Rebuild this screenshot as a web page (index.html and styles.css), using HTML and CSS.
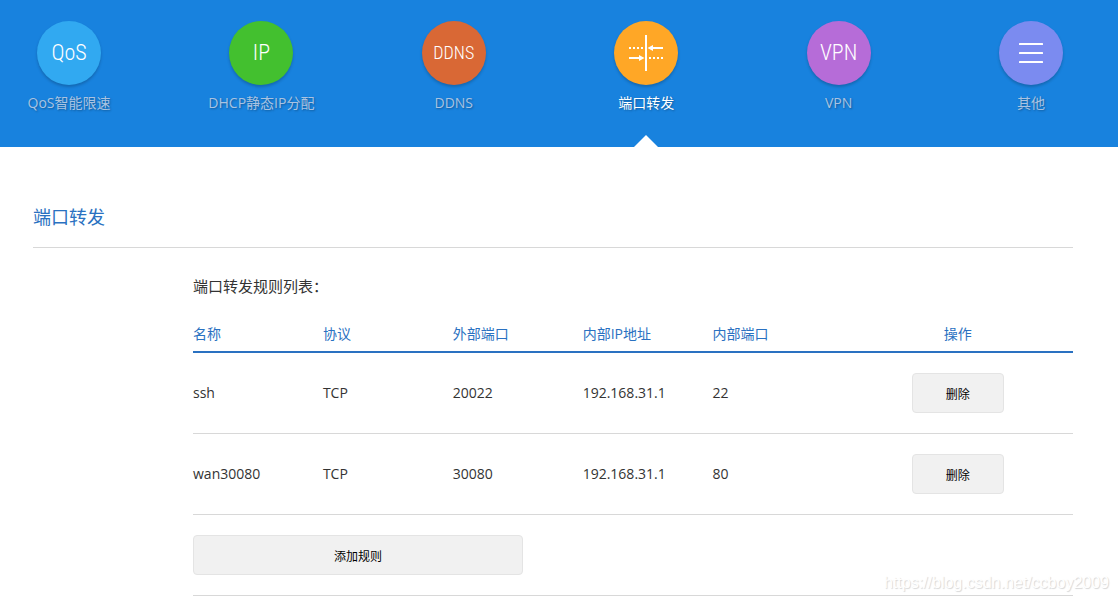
FILE: index.html
```html
<!DOCTYPE html>
<html lang="zh-CN">
<head>
<meta charset="utf-8">
<title>端口转发</title>
<link rel="stylesheet" href="styles.css">
</head>
<body>
<nav class="nav">
  <a class="nav-item" href="#qos"><span class="icon icon-qos">QoS</span><span class="nav-label">QoS智能限速</span></a>
  <a class="nav-item" href="#dhcp"><span class="icon icon-ip">IP</span><span class="nav-label">DHCP静态IP分配</span></a>
  <a class="nav-item" href="#ddns"><span class="icon icon-ddns">DDNS</span><span class="nav-label">DDNS</span></a>
  <a class="nav-item active" href="#nat" aria-current="page">
    <span class="icon icon-nat">
      <svg width="64" height="64" viewBox="0 0 64 64" fill="#fff" aria-hidden="true">
        <path d="M31 14h2v36h-2z"/>
        <path d="M15 26h2v2h-2zM19 26h2v2h-2zM23 26h2v2h-2zM27 26h2v2h-2zM35 36h2v2h-2zM39 36h2v2h-2zM43 36h2v2h-2zM47 36h2v2h-2z"/>
        <path d="M49 26v2H39v2l-5.500-3 5.500-3v2zM15 36v2h10v2l5.500-3-5.500-3v2z"/>
      </svg>
    </span>
    <span class="nav-label">端口转发</span>
  </a>
  <a class="nav-item" href="#vpn"><span class="icon icon-vpn">VPN</span><span class="nav-label">VPN</span></a>
  <a class="nav-item" href="#other">
    <span class="icon icon-other">
      <svg width="64" height="64" viewBox="0 0 64 64" fill="#fff" aria-hidden="true">
        <rect x="20" y="22" width="24" height="2" rx="0.500"/>
        <rect x="20" y="31" width="24" height="2" rx="0.500"/>
        <rect x="20" y="40" width="24" height="2" rx="0.500"/>
      </svg>
    </span>
    <span class="nav-label">其他</span>
  </a>
</nav>
<main class="content">
  <h1 class="title">端口转发</h1>
  <section class="panel">
    <h2 class="subtitle" id="rules-title">端口转发规则列表：</h2>
    <table class="rules" aria-labelledby="rules-title">
      <thead>
        <tr><th>名称</th><th>协议</th><th>外部端口</th><th>内部IP地址</th><th>内部端口</th><th class="action">操作</th></tr>
      </thead>
      <tbody>
        <tr><td>ssh</td><td>TCP</td><td>20022</td><td>192.168.31.1</td><td>22</td><td class="action"><button class="btn btn-delete" type="button">删除</button></td></tr>
        <tr><td>wan30080</td><td>TCP</td><td>30080</td><td>192.168.31.1</td><td>80</td><td class="action"><button class="btn btn-delete" type="button">删除</button></td></tr>
      </tbody>
    </table>
    <div class="add-row"><button class="btn btn-add" type="button">添加规则</button></div>
  </section>
</main>
<span class="watermark">https://blog.csdn.net/ccboy2009</span>
</body>
</html>
```
FILE: styles.css
```css
* { box-sizing: border-box; }

body {
  margin: 0;
  background: #fff;
  color: #333;
  font: 14px/20px "Open Sans", "Noto Sans CJK SC", sans-serif;
}

.nav {
  display: flex;
  justify-content: space-between;
  padding: 21px 23px 0 5px;
  background: #1882de;
}

.nav-item {
  position: relative;
  display: flex;
  flex-direction: column;
  align-items: center;
  gap: 8px;
  width: 128px;
  padding-bottom: 34px;
  color: #a9c3e2;
  text-decoration: none;
  white-space: nowrap;
  text-shadow: 1px 1px 2px rgba(0, 0, 0, 0.3);
}

.nav-item.active { color: #fff; }

.nav-item.active::after {
  content: "";
  position: absolute;
  bottom: 0;
  left: 52px;
  border: 12px solid transparent;
  border-top: 0;
  border-bottom-color: #fff;
}

.icon {
  display: flex;
  align-items: center;
  justify-content: center;
  width: 64px;
  height: 64px;
  border-radius: 50%;
  box-shadow: 0 2px 3px rgba(0, 0, 0, 0.2);
  color: #fff;
  font-family: "Roboto Condensed", Roboto, sans-serif;
  font-size: 22px;
  font-weight: 300;
  text-shadow: none;
}

.icon-qos { background: #31a9f1; }
.icon-ip { background: #43c02f; }
.icon-ddns { background: #d96835; font-size: 18px; }
.icon-nat { background: #ffa726; }
.icon-vpn { background: #b66cd8; }
.icon-other { background: #7b8bf0; }

.content { padding: 56px 45px 0 33px; }

.title {
  margin: 0;
  padding-bottom: 16px;
  border-bottom: 1px solid #d8d8d8;
  color: #2a71c1;
  font-size: 18px;
  font-weight: 400;
  line-height: 28px;
}

.panel { padding: 28px 0 0 160px; }

.subtitle {
  margin: 0 0 28px;
  font-size: 15px;
  font-weight: 400;
  line-height: 20px;
}

.rules {
  width: 100%;
  table-layout: fixed;
  border-collapse: separate;
  border-spacing: 0;
}

.rules th {
  padding: 0 0 7px;
  border-bottom: 2px solid #2a71c1;
  color: #2a71c1;
  font-weight: 400;
  text-align: left;
}

.rules td {
  padding: 20px 0;
  border-bottom: 1px solid #d8d8d8;
}

.rules .action {
  width: 26.2%;
  text-align: center;
}

.btn {
  display: inline-block;
  height: 40px;
  padding: 3px 0 0;
  border: 1px solid #e4e4e4;
  border-radius: 4px;
  background: #f1f1f1;
  color: #000;
  font: 12px/20px "Open Sans", "Noto Sans CJK SC", sans-serif;
  vertical-align: top;
}

.btn-delete { width: 92px; }
.btn-add { width: 330px; max-width: 100%; }

.add-row {
  padding: 20px 0;
  border-bottom: 1px solid #d8d8d8;
}

.watermark {
  position: absolute;
  right: 9px;
  bottom: 8px;
  color: #fff;
  font: 16px/20px "Liberation Sans", Arial, sans-serif;
  text-shadow: 1px 1px 1px rgba(0, 0, 0, 0.16);
}
```
